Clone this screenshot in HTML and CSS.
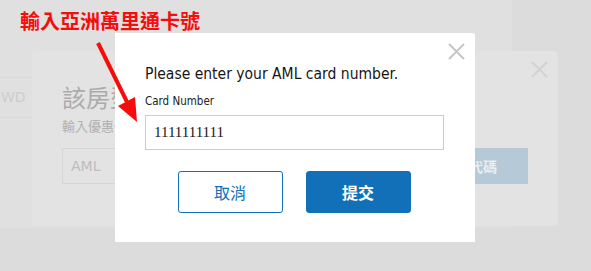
FILE: index.html
```html
<!DOCTYPE html>
<html lang="zh-Hant">
<head>
    <meta charset="UTF-8">
    <meta name="viewport" content="width=device-width, initial-scale=1.0">
    <title>AML card number</title>
    <link rel="stylesheet" href="styles.css">
</head>
<body>
    <div class="page">
        <div class="currency-row">WD</div>
    </div>

    <!-- promo code modal, behind -->
    <div class="promo-modal">
        <svg class="close-icon promo-close" viewBox="0 0 17 17"><path d="M1 1 L16 16 M16 1 L1 16"/></svg>
        <div class="promo-title">該房型</div>
        <div class="promo-hint">輸入優惠代碼</div>
        <div class="promo-row">
            <div class="promo-input">AML</div>
            <div class="promo-button">使用優惠代碼</div>
        </div>
    </div>

    <!-- card number dialog -->
    <div class="dialog">
        <svg class="close-icon dialog-close" viewBox="0 0 17 17"><path d="M1 1 L16 16 M16 1 L1 16"/></svg>
        <h2 class="dialog-title">Please enter your AML card number.</h2>
        <label class="field-label" for="cardNumber">Card Number</label>
        <input class="field-input" id="cardNumber" type="text" value="1111111111">
        <div class="dialog-buttons">
            <button class="btn btn-cancel">取消</button>
            <button class="btn btn-submit">提交</button>
        </div>
    </div>

    <!-- annotation -->
    <div class="note">輸入亞洲萬里通卡號</div>
    <svg class="arrow" viewBox="0 0 591 271">
        <line x1="98" y1="43" x2="128" y2="104"/>
        <polygon points="118,106 135,97 137,122"/>
    </svg>
</body>
</html>
```

FILE: styles.css
```css
body {
    margin: 0;
    width: 591px;
    height: 271px;
    overflow: hidden;
    position: relative;
    background: #dcdcdc;
    font-family: "DejaVu Sans Condensed", "DejaVu Sans", sans-serif;
}

.page {
    width: 512px;
    height: 228px;
    background: #e0e0e0;
    padding-top: 77px;
    box-sizing: border-box;
}
.currency-row {
    height: 41px;
    border-top: 1px solid #d9d9d9;
    border-bottom: 1px solid #d9d9d9;
    box-sizing: border-box;
    padding-left: 1px;
    line-height: 39px;
    font-family: "DejaVu Sans", sans-serif;
    font-size: 14px;
    color: #cdcdcd;
}

.close-icon {
    position: absolute;
    width: 17px;
    height: 17px;
    fill: none;
    stroke-width: 2;
}

.promo-modal {
    position: absolute;
    left: 32px;
    top: 51px;
    width: 526px;
    height: 175px;
    background: #e3e3e3;
    border-radius: 4px;
    padding: 31px 30px 0 30px;
    box-sizing: border-box;
    font-family: "Noto Sans CJK TC", sans-serif;
}
.promo-close {
    right: 10px;
    top: 10px;
    stroke: #d3d3d3;
}
.promo-title {
    font-size: 24px;
    line-height: 30px;
    color: #ababab;
}
.promo-hint {
    margin-top: 5px;
    font-size: 13px;
    line-height: 18px;
    color: #b0b0b0;
}
.promo-row {
    display: flex;
    gap: 10px;
    margin-top: 13px;
    height: 36px;
}
.promo-input {
    flex: 1;
    border: 1px solid #d6d6d6;
    padding-left: 8px;
    line-height: 34px;
    font-family: "DejaVu Sans", sans-serif;
    font-size: 14px;
    color: #bdbdbd;
}
.promo-button {
    width: 146px;
    background: #b5c9d7;
    color: #e9eef2;
    font-weight: bold;
    font-size: 14px;
    line-height: 36px;
    text-align: center;
}

.dialog {
    position: absolute;
    left: 115px;
    top: 33px;
    width: 360px;
    height: 209px;
    background: #ffffff;
    border-radius: 0 3px 0 0;
    padding: 31px 31px 29px 30px;
    box-sizing: border-box;
    display: flex;
    flex-direction: column;
}
.dialog-close {
    right: 10px;
    top: 10px;
    stroke: #c6c6c6;
}
.dialog-title {
    margin: 0;
    font-size: 15.5px;
    line-height: 20px;
    font-weight: normal;
    color: #161616;
}
.field-label {
    margin-top: 10px;
    font-size: 11.5px;
    line-height: 14px;
    color: #222222;
}
.field-input {
    margin: 7px 0 0 0;
    height: 35px;
    width: 100%;
    box-sizing: border-box;
    border: 1px solid #cccccc;
    padding: 0 8px;
    font-family: "Liberation Serif", serif;
    font-size: 15px;
    color: #1a1a1a;
    outline: none;
}
.dialog-buttons {
    margin-top: 21px;
    display: flex;
    justify-content: center;
    gap: 23px;
    padding-right: 1px;
}
.btn {
    width: 105px;
    height: 42px;
    border-radius: 3px;
    font-family: "Noto Sans CJK TC", sans-serif;
    font-size: 16px;
    cursor: pointer;
}
.btn-cancel {
    background: #ffffff;
    border: 1px solid #1170b8;
    color: #1170b8;
}
.btn-submit {
    background: #1170b8;
    border: 1px solid #1170b8;
    color: #ffffff;
    font-weight: bold;
}

.note {
    position: absolute;
    left: 20px;
    top: 7px;
    font-family: "Noto Sans CJK TC", sans-serif;
    font-size: 20px;
    font-weight: 700;
    line-height: 28px;
    color: #f50d0d;
}
.arrow {
    position: absolute;
    left: 0;
    top: 0;
    width: 591px;
    height: 271px;
    pointer-events: none;
}
.arrow line {
    stroke: #f50d0d;
    stroke-width: 4;
}
.arrow polygon {
    fill: #f50d0d;
}
```
